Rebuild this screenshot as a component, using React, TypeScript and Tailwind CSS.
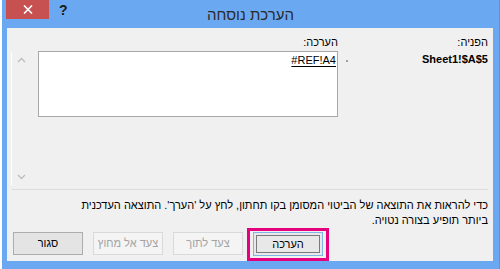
const FONT = { fontFamily: '"Liberation Sans", Arial, sans-serif' };

function Chevron({ down }: { down?: boolean }) {
  return (
    <svg width="9" height="6" viewBox="0 0 9 6" className="block">
      <path
        d={down ? 'M1 1 L4.5 4.5 L8 1' : 'M1 5 L4.5 1.5 L8 5'}
        fill="none"
        stroke="#bdbdbd"
        strokeWidth="1.3"
      />
    </svg>
  );
}

function Button({
  label,
  disabled,
  focused,
}: {
  label: string;
  disabled?: boolean;
  focused?: boolean;
}) {
  if (focused) {
    return (
      <div className="relative shrink-0 w-[70px] h-[24px]">
        <div className="w-full h-full border border-[#7fb4e6] bg-[#e8e8e8] p-[2px]">
          <div className="w-full h-full border border-[#7a7a7a] flex items-center justify-center text-[11px] text-black">
            {label}
          </div>
        </div>
        <div className="absolute -left-[6px] -right-[6px] -top-[4px] -bottom-[5px] border-[3px] border-[#e5007d] pointer-events-none" />
      </div>
    );
  }
  return (
    <div
      className={
        disabled
          ? 'shrink-0 w-[70px] h-[23px] border border-[#d9d9d9] bg-[#f4f4f4] text-[#a3a3a3] flex items-center justify-center text-[11px] whitespace-nowrap'
          : 'shrink-0 w-[70px] h-[23px] border border-[#adadad] bg-[#e4e4e4] text-black flex items-center justify-center text-[11px] whitespace-nowrap'
      }
    >
      {label}
    </div>
  );
}

export default function App() {
  return (
    <div className="w-[500px] h-[269px] bg-white" style={FONT}>
      <div className="ml-[2px] w-[498px] h-[269px] bg-[#6aa9f1] border-r border-[#5b97dc] flex flex-col">
        {/* title bar */}
        <div className="h-[28px] grid grid-cols-[1fr_auto_1fr]">
          <div className="flex items-start">
            <div className="ml-[4px] w-[43px] h-[19px] bg-[#c75050] flex items-center justify-center">
              <svg width="10" height="9" viewBox="0 0 10 9">
                <path d="M1 0.5 L9 8.5 M9 0.5 L1 8.5" stroke="#ffffff" strokeWidth="1.6" />
              </svg>
            </div>
            <div className="ml-[10px] mt-[2px] text-[14px] font-bold text-[#1a1a1a] leading-[16px]">?</div>
          </div>
          <div className="pt-[6px] text-[15px] leading-[17px] text-[#2b2b2b]" dir="rtl">
            הערכת נוסחה
          </div>
          <div />
        </div>

        {/* content panel */}
        <div className="ml-[5px] mr-[6px] h-[233px] bg-[#f0f0f0] flex flex-col" dir="rtl">
          <div className="h-[161px] flex flex-row pr-[5px] pl-[3px] pt-[8px]">
            <div className="w-[135px] flex flex-col text-[11px] leading-[13px] text-black">
              <div>הפניה:</div>
              <div className="mt-[4px] font-bold text-right" dir="ltr">
                Sheet1!$A$5
              </div>
            </div>
            <div className="w-[15px] pr-[5px] pt-[24px] flex">
              <div className="w-[2px] h-[2px] bg-[#a0a0a0]" />
            </div>
            <div className="w-[300px] flex flex-col text-[11px] leading-[13px] text-black">
              <div>הערכה:</div>
              <div className="mt-[2px] h-[66px] bg-white border border-[#a8a8a8] pr-[1px] pt-[2px]">
                <div className="text-right" dir="ltr">
                  <span className="underline underline-offset-2">#REF!A4</span>
                </div>
              </div>
            </div>
            <div className="w-[8px]" />
            <div className="w-[19px] mt-[16px] h-[133px] border-l border-white flex flex-col items-center justify-between pt-[5px] pb-[5px] pl-[1px]">
              <Chevron />
              <Chevron down />
            </div>
          </div>

          <div className="mx-[5px] border-t border-[#dcdcdc]" />

          <div className="mt-[8px] pr-[5px] text-[11px] leading-[15px] text-black">
            כדי להראות את התוצאה של הביטוי המסומן בקו תחתון, לחץ על 'הערך'. התוצאה העדכנית
            <br />
            ביותר תופיע בצורה נטויה.
          </div>

          <div className="mt-[4px] flex flex-row justify-end gap-[10px] pl-[6px]">
            <Button label="הערכה" focused />
            <Button label="צעד לתוך" disabled />
            <Button label="צעד אל מחוץ" disabled />
            <Button label="סגור" />
          </div>
        </div>
      </div>
    </div>
  );
}
